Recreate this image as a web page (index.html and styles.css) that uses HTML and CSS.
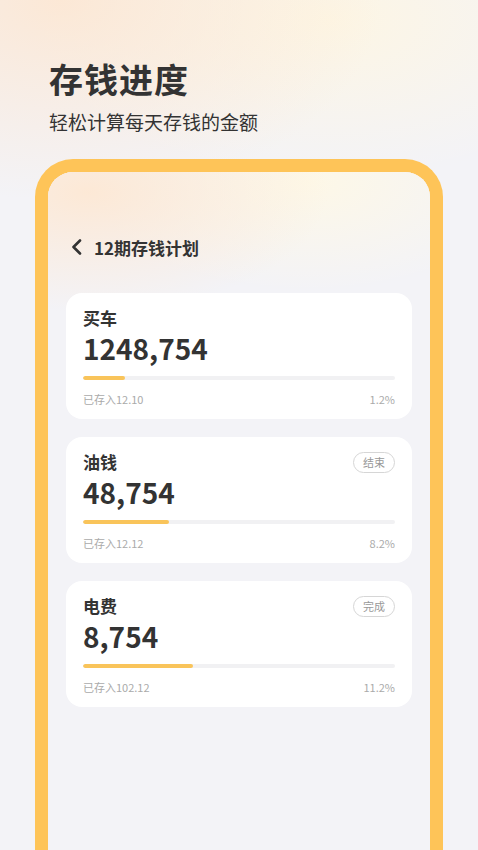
FILE: index.html
```html
<!DOCTYPE html>
<html lang="zh">

<head>
  <meta charset="UTF-8">
  <meta name="viewport" content="width=device-width, initial-scale=1.0">
  <title>存钱进度</title>
  <link rel="stylesheet" href="styles.css">
</head>

<body>
  <div class="page">
    <div class="intro">
      <h1 class="intro-title">存钱进度</h1>
      <p class="intro-sub">轻松计算每天存钱的金额</p>
    </div>

    <div class="phone">
      <div class="screen">
        <div class="nav">
          <svg class="nav-back" width="14" height="16" viewBox="0 0 14 16">
            <path d="M10 1.5 L3.5 8 L10 14.5" fill="none" stroke="#333" stroke-width="2.6" stroke-linecap="round" stroke-linejoin="round" />
          </svg>
          <span class="nav-title">12期存钱计划</span>
        </div>

        <div class="plan-list">
          <div class="plan">
            <div class="plan-head">
              <span class="plan-name">买车</span>
            </div>
            <div class="plan-amount">1248,754</div>
            <div class="plan-bar"><div class="plan-fill" style="width: 13.5%"></div></div>
            <div class="plan-foot">
              <span>已存入12.10</span>
              <span>1.2%</span>
            </div>
          </div>

          <div class="plan">
            <div class="plan-head">
              <span class="plan-name">油钱</span>
              <span class="plan-tag">结束</span>
            </div>
            <div class="plan-amount">48,754</div>
            <div class="plan-bar"><div class="plan-fill" style="width: 27.5%"></div></div>
            <div class="plan-foot">
              <span>已存入12.12</span>
              <span>8.2%</span>
            </div>
          </div>

          <div class="plan">
            <div class="plan-head">
              <span class="plan-name">电费</span>
              <span class="plan-tag">完成</span>
            </div>
            <div class="plan-amount">8,754</div>
            <div class="plan-bar"><div class="plan-fill" style="width: 35.3%"></div></div>
            <div class="plan-foot">
              <span>已存入102.12</span>
              <span>11.2%</span>
            </div>
          </div>
        </div>
      </div>
    </div>
  </div>
</body>

</html>
```

FILE: styles.css
```css
:root {
  --color-bg: #f3f3f7;
  --color-frame: #fec458;
  --color-text: #333333;
  --color-muted: #aaaaaa;
  --color-track: #f1f1f3;
}

html,
body {
  margin: 0;
  padding: 0;
  width: 100%;
  height: 100%;
  overflow: hidden;
  font-family: "Noto Sans CJK SC", "Noto Sans", sans-serif;
  color: var(--color-text);
  background: var(--color-bg);
}

.page {
  width: 478px;
  height: 850px;
  overflow: hidden;
  background:
    radial-gradient(ellipse 320px 200px at 60px 0, rgba(253, 230, 208, 0.85), rgba(253, 230, 208, 0) 100%),
    radial-gradient(ellipse 300px 160px at 330px 20px, rgba(254, 246, 226, 0.9), rgba(254, 246, 226, 0) 100%),
    var(--color-bg);
}

.intro {
  padding: 55px 0 0 49px;
  height: 104px;

  & .intro-title {
    margin: 0;
    font-size: 34px;
    line-height: 48px;
    font-weight: 700;
    letter-spacing: 1px;
  }

  & .intro-sub {
    margin: 0;
    padding-top: 6px;
    font-size: 19px;
    line-height: 26px;
    font-weight: 400;
  }
}

.phone {
  margin-left: 35px;
  width: 408px;
  height: 720px;
  box-sizing: border-box;
  border: 13px solid var(--color-frame);
  border-bottom: none;
  border-radius: 38px 38px 0 0;
  overflow: hidden;
}

.screen {
  height: 100%;
  padding: 0 18px;
  box-sizing: border-box;
  background:
    radial-gradient(ellipse 240px 120px at 40px 20px, rgba(253, 232, 212, 0.95), rgba(253, 232, 212, 0) 100%),
    radial-gradient(ellipse 220px 110px at 260px 10px, rgba(254, 248, 230, 0.95), rgba(254, 248, 230, 0) 100%),
    var(--color-bg);
}

.nav {
  display: flex;
  align-items: center;
  height: 24px;
  padding-top: 63px;

  & .nav-back {
    flex-shrink: 0;
    margin-left: 4px;
  }

  & .nav-title {
    margin-left: 10px;
    font-size: 17px;
    font-weight: 700;
  }
}

.plan-list {
  display: flex;
  flex-direction: column;
  gap: 18px;
  margin-top: 34px;
}

.plan {
  background: #fff;
  border-radius: 16px;
  padding: 13px 17px 12px;
  height: 126px;
  box-sizing: border-box;

  & .plan-head {
    display: flex;
    justify-content: space-between;
    align-items: center;
    height: 24px;
  }

  & .plan-name {
    font-size: 17px;
    line-height: 24px;
    font-weight: 700;
  }

  & .plan-tag {
    width: 42px;
    height: 21px;
    box-sizing: border-box;
    border: 1px solid #d6d6d6;
    border-radius: 11px;
    font-size: 11px;
    line-height: 19px;
    text-align: center;
    color: #999;
  }

  & .plan-amount {
    margin-top: 2px;
    font-size: 28px;
    line-height: 32px;
    font-weight: 700;
  }

  & .plan-bar {
    margin-top: 12px;
    height: 4px;
    border-radius: 2px;
    background: var(--color-track);
    overflow: hidden;
  }

  & .plan-fill {
    height: 100%;
    border-radius: 2px;
    background: #f9c45a;
  }

  & .plan-foot {
    display: flex;
    justify-content: space-between;
    margin-top: 11px;
    font-size: 11px;
    line-height: 16px;
    color: var(--color-muted);
  }
}
```
